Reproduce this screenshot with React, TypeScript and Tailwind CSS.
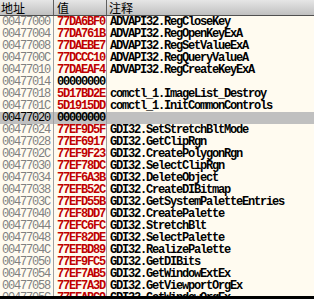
const rows: [string, string, string][] = [
  ["00477000", "77DA6BF0", "ADVAPI32.RegCloseKey"],
  ["00477004", "77DA761B", "ADVAPI32.RegOpenKeyExA"],
  ["00477008", "77DAEBE7", "ADVAPI32.RegSetValueExA"],
  ["0047700C", "77DCCC10", "ADVAPI32.RegQueryValueA"],
  ["00477010", "77DAEAF4", "ADVAPI32.RegCreateKeyExA"],
  ["00477014", "00000000", ""],
  ["00477018", "5D17BD2E", "comctl_1.ImageList_Destroy"],
  ["0047701C", "5D1915DD", "comctl_1.InitCommonControls"],
  ["00477020", "00000000", ""],
  ["00477024", "77EF9D5F", "GDI32.SetStretchBltMode"],
  ["00477028", "77EF6917", "GDI32.GetClipRgn"],
  ["0047702C", "77EF9F23", "GDI32.CreatePolygonRgn"],
  ["00477030", "77EF78DC", "GDI32.SelectClipRgn"],
  ["00477034", "77EF6A3B", "GDI32.DeleteObject"],
  ["00477038", "77EFB52C", "GDI32.CreateDIBitmap"],
  ["0047703C", "77EFD55B", "GDI32.GetSystemPaletteEntries"],
  ["00477040", "77EF8DD7", "GDI32.CreatePalette"],
  ["00477044", "77EFC6FC", "GDI32.StretchBlt"],
  ["00477048", "77EF82DE", "GDI32.SelectPalette"],
  ["0047704C", "77EFBD89", "GDI32.RealizePalette"],
  ["00477050", "77EF9FC5", "GDI32.GetDIBits"],
  ["00477054", "77EF7AB5", "GDI32.GetWindowExtEx"],
  ["00477058", "77EF7A3D", "GDI32.GetViewportOrgEx"],
  ["0047705C", "77EFABC9", "GDI32.GetWindowOrgEx"],
];

const SELECTED = 8;

export default function App() {
  return (
    <div className="flex h-[299px] w-[314px] flex-col overflow-hidden bg-[#fffbf0]">
      <div className="grid h-[16px] shrink-0 grid-cols-[53px_53px_1fr] border-b border-[#505050] bg-gradient-to-b from-[#e6e6e6] to-[#c0c0c0] font-['Noto_Sans_CJK_SC',sans-serif] text-[12px] leading-[15px] text-black">
        <div className="pl-[1px]">地址</div>
        <div className="border-l border-[#606060] pl-[3px]">值</div>
        <div className="border-l border-[#606060] pl-[2px]">注释</div>
      </div>
      <div className="flex-1 overflow-hidden font-['Liberation_Mono',monospace] text-[12px] leading-[12px] font-bold tracking-[-1.2px]">
        {rows.map(([addr, val, note], i) => {
          const sel = i === SELECTED;
          const zero = val === "00000000";
          return (
            <div
              key={addr}
              className={`grid h-[12px] grid-cols-[53px_53px_1fr] whitespace-pre ${sel ? "bg-[#c0c0c0]" : ""}`}
            >
              <div className={`pl-[2px] font-normal ${sel ? "text-black" : "text-[#808080]"}`}>{addr}</div>
              <div className={`border-l border-[#a0a0a0] pl-[3px] ${zero ? "text-black" : "text-[#c00000]"}`}>
                {val}
              </div>
              <div className="border-l border-[#a0a0a0] pl-[3px] text-black">{note}</div>
            </div>
          );
        })}
      </div>
      <div className="h-[3px] shrink-0 bg-black" />
    </div>
  );
}
